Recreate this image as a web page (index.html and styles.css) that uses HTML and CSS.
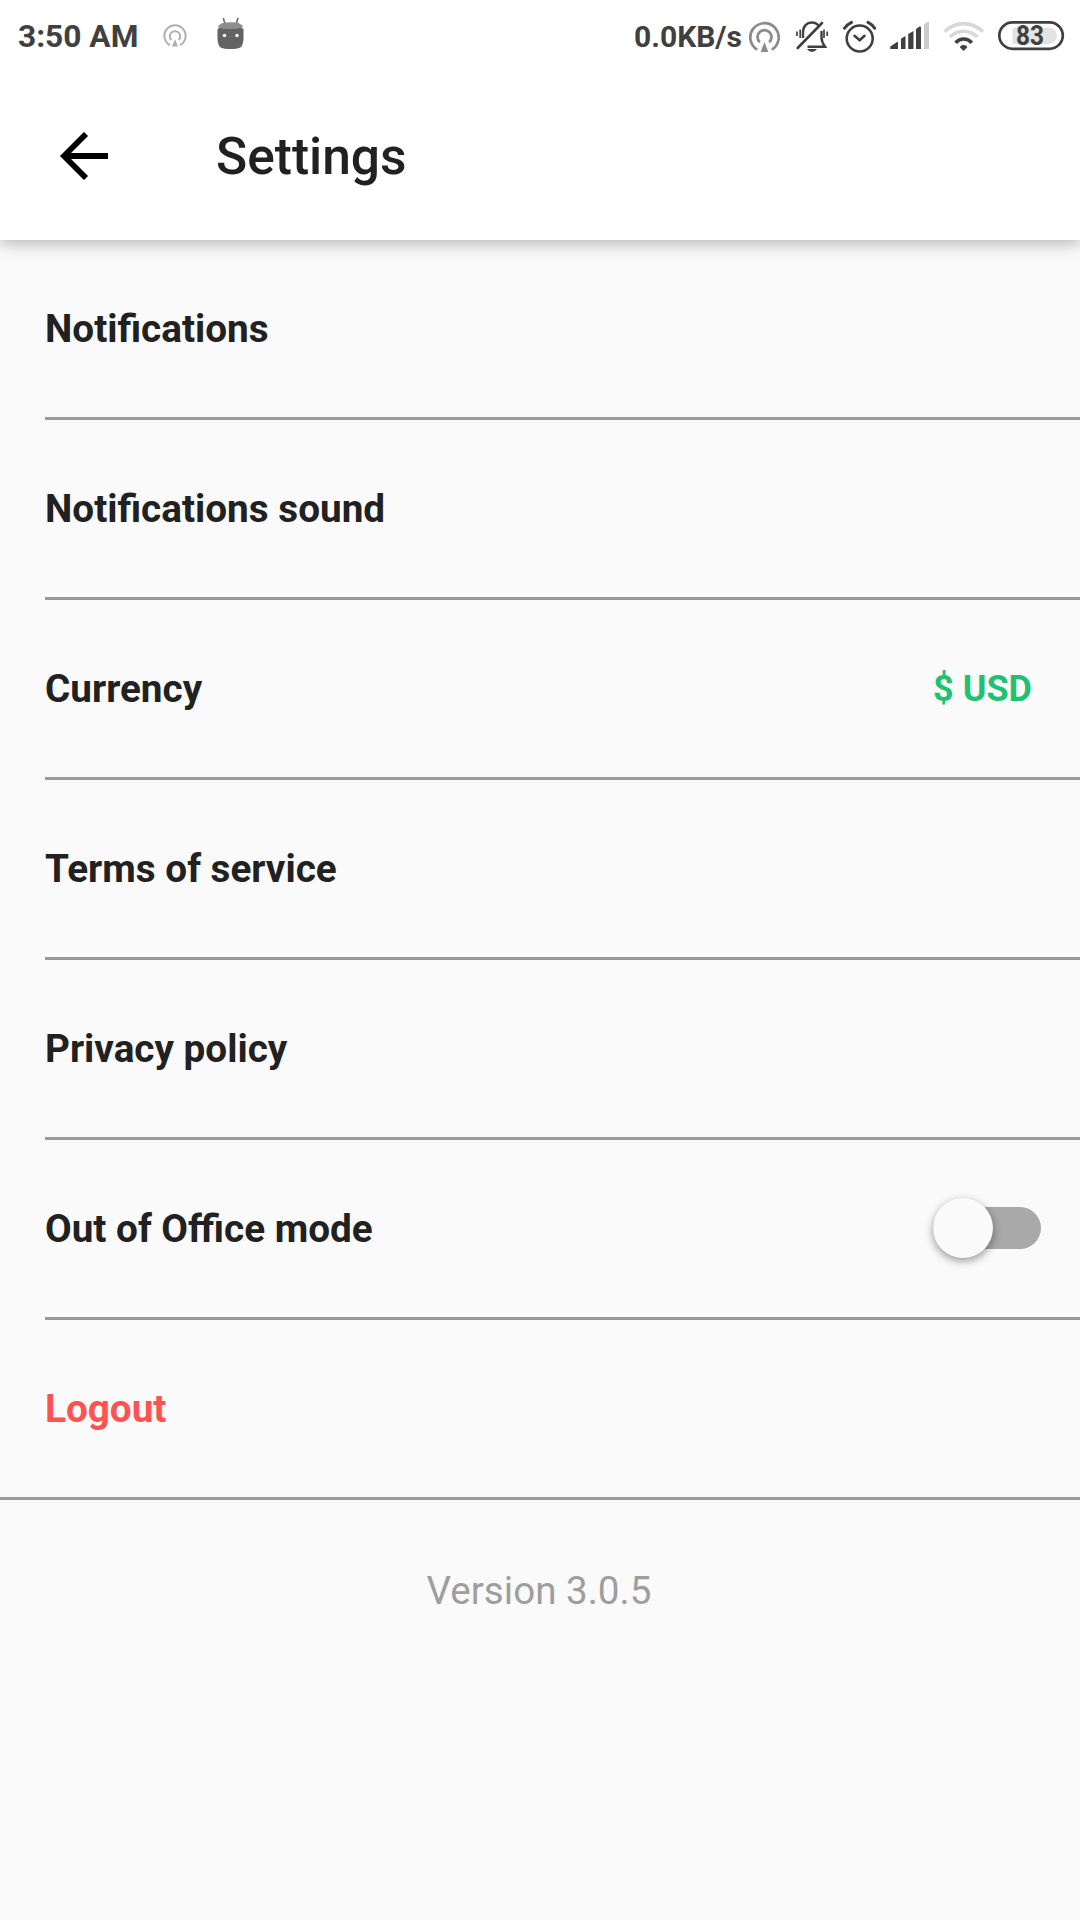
FILE: index.html
```html
<!DOCTYPE html>
<html lang="en">
<head>
<meta charset="utf-8">
<title>Settings</title>
<link rel="stylesheet" href="styles.css">
</head>
<body>
<header class="top">
  <div class="status">
    <div class="status-group">
      <span class="clock">3:50 AM</span>
      <svg class="cast-small" width="26" height="72" viewBox="162 0 26 72" fill="none" stroke="#b0b0b0" stroke-width="2">
        <path d="M170 45.2A10.6 10.6 0 1 1 180 45.2"/>
        <path d="M171.3 40A5.2 5.2 0 1 1 178.7 40"/>
        <path d="M175 39L178 46.5H172Z" fill="#b0b0b0" stroke="none"/>
      </svg>
      <svg class="robot" width="28" height="72" viewBox="217 0 28 72">
        <path d="M223.3 18L225 24M238 18L236.300 24" stroke="#6b6b6b" stroke-width="1.6" fill="none"/>
        <path d="M217.500 29Q219 27 230.500 27Q242 27 243.500 29V39Q243 46 240 47.800Q237 49 230.500 49Q224 49 221 47.800Q218 46 217.500 39Z" fill="#636363"/>
        <path d="M218 27.500Q218.500 22.300 230.500 22.300Q242.500 22.300 243 27.500Q238 29 230.500 29Q223 29 218 27.500Z" fill="#8d8d8d"/>
        <circle cx="224.500" cy="35.500" r="1.700" fill="#fff"/><circle cx="237" cy="35.500" r="1.700" fill="#fff"/>
      </svg>
    </div>
    <div class="status-group">
      <span class="speed">0.0KB/s</span>
      <svg class="cast" width="32" height="72" viewBox="748 0 32 72" fill="none" stroke="#8b8b8b" stroke-width="2.700">
        <path d="M757.200 49.600A14.200 14.200 0 1 1 771.800 49.600"/>
        <path d="M759.800 42.300A7 7 0 1 1 769.200 42.300"/>
        <path d="M764.500 42L768.300 52H760.700Z" fill="#8b8b8b" stroke="none"/>
      </svg>
      <svg class="bell" width="34" height="72" viewBox="795 0 34 72" fill="none" stroke="#404040" stroke-width="2.400">
        <path d="M803 38V32.500C803 26 807 22.500 811.500 22.500C815 22.500 817.500 24 819 26.300M821.500 31V37C821.500 41.500 823 44 825 46.700H807.500"/>
        <path d="M797.700 48L822 23" stroke-width="2.600" stroke-linecap="round"/>
        <path d="M797 31.500V36M800.200 29.500V38M824 29.500V38M827.200 31.500V36" stroke-width="1.700"/>
        <path d="M807 49H817Q815 52 812 52Q809 52 807 49Z" fill="#404040" stroke="none"/>
      </svg>
      <svg class="alarm" width="34" height="72" viewBox="843 0 34 72" fill="none" stroke="#404040" stroke-width="2.600" stroke-linecap="round">
        <circle cx="859.700" cy="38.500" r="13"/>
        <path d="M854.500 35.800L859.700 40.300L864.500 35.800"/>
        <path d="M844.500 28.300Q847 24.500 851.500 22.300M868 22.300Q872.500 24.500 874.700 28.300" stroke-width="3"/>
      </svg>
      <svg class="signal" width="40" height="72" viewBox="890 0 40 72" fill="#404040">
        <path d="M890.300 49V46.500L897 42Q898 41.500 898 42.500V49ZM901 49V38.800L905.500 36V49ZM908.200 49V34L913.500 31V49ZM916 49V29L919.500 26.500Q921 26 921 27.500V49Z"/>
        <path d="M924 49V24.500L927.500 21.800Q929 21 929 22.500V49Z" fill="#ccc"/>
      </svg>
      <svg class="wifi" width="42" height="72" viewBox="943 0 42 72" fill="none" stroke="#d8d8d8" stroke-width="3.600">
        <path d="M944.500 31.700Q953 23.600 963.600 23.600Q974.500 23.600 982.800 31.700"/>
        <path d="M950 37Q956 31.300 963.600 31.300Q971.500 31.300 977.300 37"/>
        <path d="M955.600 42.800Q959 39 963.600 39Q968.300 39 971.800 42.800" stroke="#404040" stroke-width="3.600"/>
        <path d="M960 47.500Q960 45 963.600 45Q967.200 45 967.200 47.500L963.600 51Z" fill="#404040" stroke="none"/>
      </svg>
      <svg class="battery" width="67" height="72" viewBox="998 0 67 72">
        <path d="M1012.500 27.500H1049.500A8.300 8.300 0 0 1 1049.500 44H1012.500Z" fill="#e3e3e3"/>
        <rect x="999.300" y="22.300" width="63.500" height="26.500" rx="13.250" fill="none" stroke="#404040" stroke-width="2.700"/>
        <text class="battery-level" x="1016" y="45" textLength="28" lengthAdjust="spacingAndGlyphs">83</text>
      </svg>
    </div>
  </div>
  <div class="toolbar">
    <svg class="back" width="48" height="48" viewBox="0 0 48 48" fill="none" stroke="#000" stroke-width="5.800">
      <path d="M48 24H4M26 2L4 24L26 46"/>
    </svg>
    <h1 class="title">Settings</h1>
  </div>
</header>
<main>
  <ul class="list">
    <li class="row">Notifications</li>
    <li class="row">Notifications sound</li>
    <li class="row">Currency <span class="value">$ USD</span></li>
    <li class="row">Terms of service</li>
    <li class="row">Privacy policy</li>
    <li class="row">Out of Office mode <span class="switch"><span class="thumb"></span></span></li>
    <li class="row logout">Logout</li>
  </ul>
  <p class="version">Version 3.0.5</p>
</main>
</body>
</html>
```
FILE: styles.css
```css
* { box-sizing: border-box; }
body {
  margin: 0;
  min-height: 1920px;
  background: #fafafa;
  color: #212121;
  font-family: Roboto, sans-serif;
}
svg { display: block; flex: none; }
.top {
  position: relative;
  height: 240px;
  background: #fff;
  box-shadow: 0 3px 16px rgba(0, 0, 0, .3);
}
.status {
  display: flex;
  justify-content: space-between;
  height: 72px;
  padding: 0 15px 0 18px;
}
.status-group { display: flex; align-items: center; }
.clock, .speed {
  color: #404040;
  font-weight: 700;
  line-height: 72px;
  white-space: nowrap;
}
.clock { width: 144px; padding-top: 1px; font-size: 31.7px; }
.speed { width: 114px; padding-top: 1px; font-size: 30px; }
.robot { margin-left: 29px; }
.bell { margin-left: 15px; }
.alarm { margin-left: 14px; }
.signal, .wifi, .battery { margin-left: 13px; }
.battery-level { fill: #404040; font-size: 27px; font-weight: 700; }
.toolbar {
  display: flex;
  align-items: center;
  height: 168px;
  padding-left: 60px;
}
.back { margin-right: 108px; }
.title {
  margin: 0;
  padding-top: 2px;
  font-size: 51.5px;
  font-weight: 500;
  line-height: 60px;
}
.list { margin: 0; padding: 0; list-style: none; }
.row {
  display: flex;
  align-items: center;
  justify-content: space-between;
  height: 180px;
  margin-left: 45px;
  padding-right: 48px;
  border-bottom: 3px solid #999;
  font-size: 38.7px;
  font-weight: 700;
}
.value { color: #1fc173; font-size: 36px; }
.switch {
  display: flex;
  align-items: center;
  width: 108px;
  height: 42px;
  margin: 0 -9px 1px 0;
  border-radius: 21px;
  background: #a9a9a9;
}
.thumb {
  width: 60px;
  height: 60px;
  border-radius: 50%;
  background: #fafafa;
  box-shadow: 0 3px 9px rgba(0, 0, 0, .4);
}
.logout {
  margin-left: 0;
  padding-left: 45px;
  color: #ff5252;
}
.version {
  margin: 68px 2px 0 0;
  color: #9e9e9e;
  font-size: 38.6px;
  line-height: 46px;
  text-align: center;
}
```
